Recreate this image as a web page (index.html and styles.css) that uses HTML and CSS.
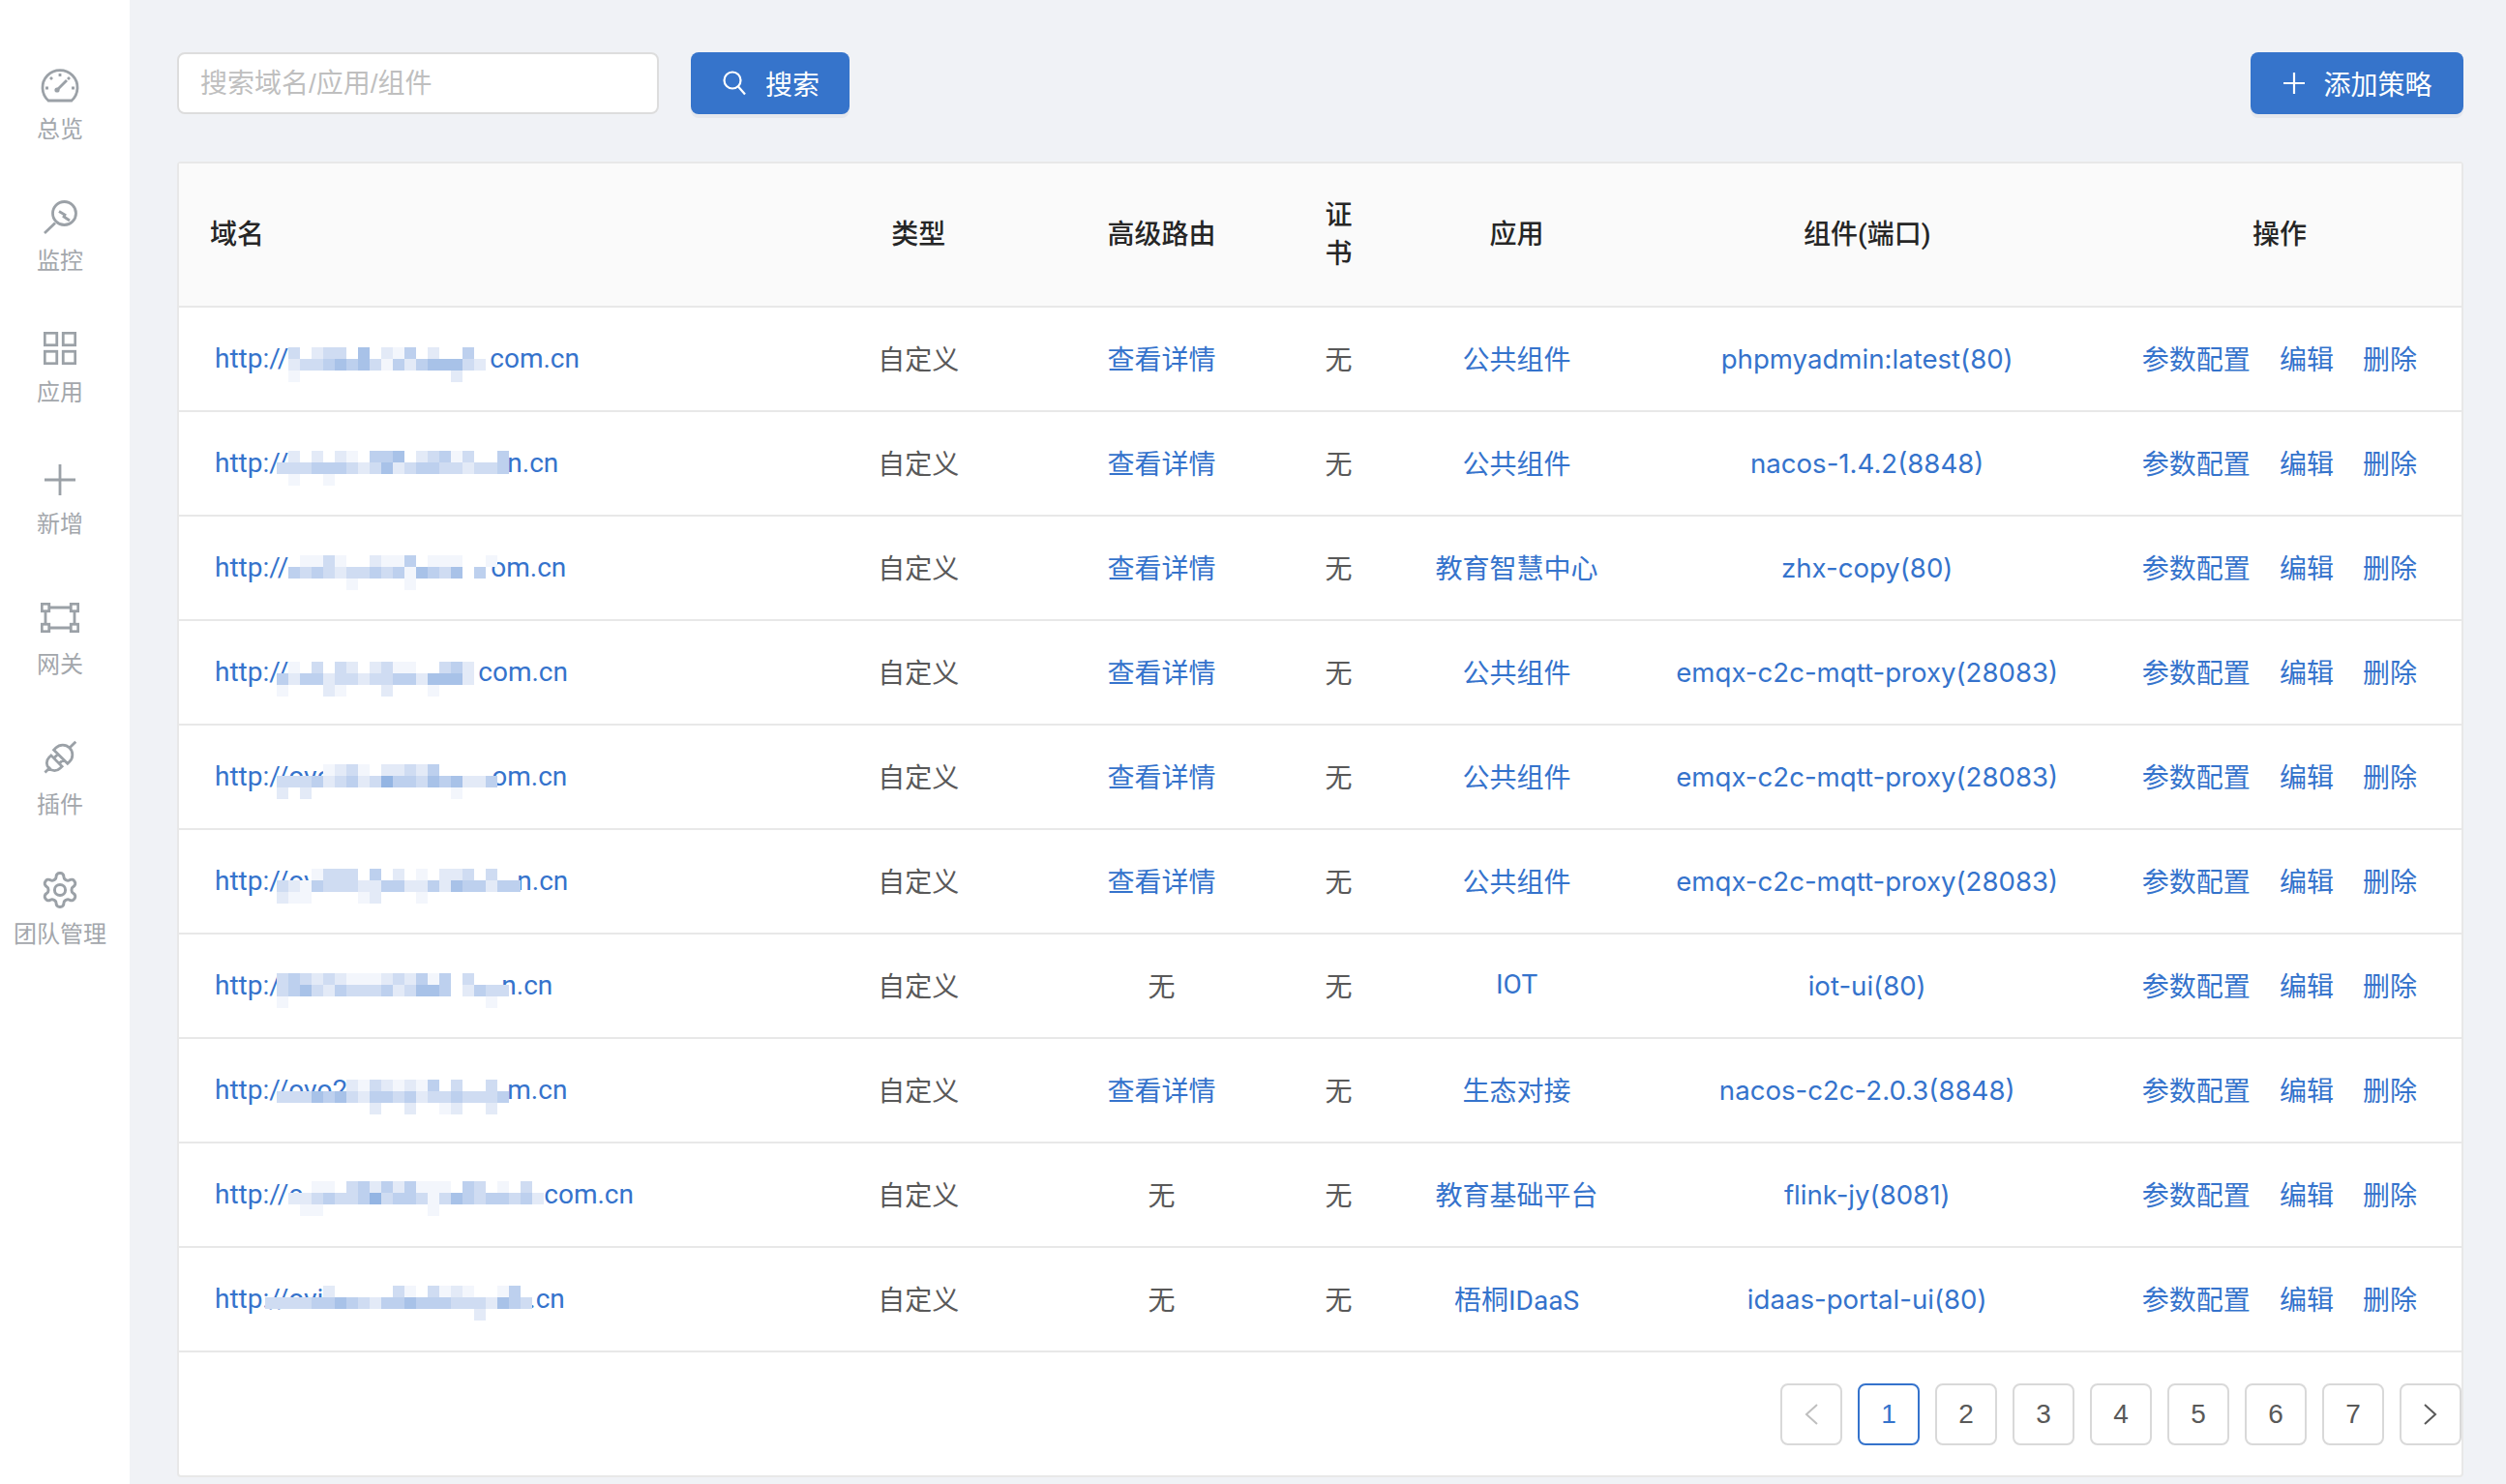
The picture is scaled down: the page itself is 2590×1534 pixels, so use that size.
FILE: index.html
```html
<!DOCTYPE html>
<html lang="zh-CN">
<head>
    <meta charset="UTF-8">
    <title>策略列表</title>
    <link rel="stylesheet" href="styles.css">
</head>
<body>
    <nav class="sidebar">
        <a class="nav-item" href="#">
            <span class="nav-icon">
                <svg width="40" height="36" viewBox="0 0 40 36"><path d="M8 34A18 18 0 1 1 32 34Z"/><path d="M20 6v3M10 10l2 2M30 10l-2 2M5 21h3M32 21h3"/><path d="M17 23L27 13"/><circle class="fill" cx="17" cy="23" r="2.6"/></svg>
            </span>
            <span class="nav-label">总览</span>
        </a>
        <a class="nav-item" href="#">
            <span class="nav-icon">
                <svg width="40" height="40" viewBox="0 0 40 40"><circle cx="24.5" cy="16.5" r="12"/><path d="M4 37l11-10.500"/><path d="M19 14.500l6 3.500-1 2 6 4"/></svg>
            </span>
            <span class="nav-label">监控</span>
        </a>
        <a class="nav-item" href="#">
            <span class="nav-icon">
                <svg width="34" height="34" viewBox="0 0 34 34"><rect x="1.250" y="1.250" width="12.500" height="12.500"/><rect x="20.250" y="1.250" width="12.500" height="12.500"/><rect x="1.250" y="20.250" width="12.500" height="12.500"/><rect x="20.250" y="20.250" width="12.500" height="12.500"/></svg>
            </span>
            <span class="nav-label">应用</span>
        </a>
        <a class="nav-item" href="#">
            <span class="nav-icon">
                <svg width="32" height="32" viewBox="0 0 32 32"><path d="M16 0v32M0 16h32"/></svg>
            </span>
            <span class="nav-label">新增</span>
        </a>
        <a class="nav-item nav-item-tall" href="#">
            <span class="nav-icon">
                <svg width="40" height="31" viewBox="0 0 40 31"><rect x="1.250" y="1.250" width="7.500" height="7.500"/><rect x="31.250" y="1.250" width="7.500" height="7.500"/><rect x="1.250" y="22.250" width="7.500" height="7.500"/><rect x="31.250" y="22.250" width="7.500" height="7.500"/><path d="M9 5h22M9 26h22M5 9v13M35 9v13"/></svg>
            </span>
            <span class="nav-label">网关</span>
        </a>
        <a class="nav-item nav-item-tall" href="#">
            <span class="nav-icon">
                <svg width="38" height="38" viewBox="0 0 38 38"><g transform="rotate(-45 19 19)"><path d="M-3 19H5M14 11H11a8 8 0 0 0 0 16h3ZM14 15h5M14 23h5M20 9V29h3a10 10 0 0 0 0-20ZM33 19h9"/></g></svg>
            </span>
            <span class="nav-label">插件</span>
        </a>
        <a class="nav-item nav-item-last" href="#">
            <span class="nav-icon">
                <svg class="gear" width="42" height="42" viewBox="0 0 24 24"><path d="M12.220 2h-.44a2 2 0 0 0-2 2v.18a2 2 0 0 1-1 1.730l-.43.25a2 2 0 0 1-2 0l-.15-.08a2 2 0 0 0-2.730.73l-.22.38a2 2 0 0 0 .73 2.730l.15.1a2 2 0 0 1 1 1.720v.51a2 2 0 0 1-1 1.740l-.15.09a2 2 0 0 0-.73 2.730l.22.38a2 2 0 0 0 2.730.73l.15-.08a2 2 0 0 1 2 0l.43.25a2 2 0 0 1 1 1.730V20a2 2 0 0 0 2 2h.44a2 2 0 0 0 2-2v-.18a2 2 0 0 1 1-1.730l.43-.25a2 2 0 0 1 2 0l.15.08a2 2 0 0 0 2.730-.73l.22-.39a2 2 0 0 0-.73-2.730l-.15-.08a2 2 0 0 1-1-1.740v-.5a2 2 0 0 1 1-1.740l.15-.09a2 2 0 0 0 .73-2.730l-.22-.38a2 2 0 0 0-2.730-.73l-.15.08a2 2 0 0 1-2 0l-.43-.25a2 2 0 0 1-1-1.730V4a2 2 0 0 0-2-2z"/><circle cx="12" cy="12" r="3.200"/></svg>
            </span>
            <span class="nav-label">团队管理</span>
        </a>
    </nav>

    <main class="main">
        <div class="toolbar">
            <input class="search-input" type="text" placeholder="搜索域名/应用/组件">
            <button class="btn btn-search">
                <svg width="25" height="26" viewBox="0 0 25 26"><circle cx="10" cy="10" r="8.500"/><path d="M16 16.500l7 8"/></svg>
                搜索
            </button>
            <button class="btn btn-add">
                <svg width="22" height="22" viewBox="0 0 22 22"><path d="M11 0v22M0 11h22"/></svg>
                添加策略
            </button>
        </div>

        <div class="card">
            <table class="strategy-table">
                <colgroup>
                    <col class="col-domain"><col class="col-type"><col class="col-route"><col class="col-cert"><col class="col-app"><col class="col-comp"><col class="col-ops">
                </colgroup>
                <thead>
                    <tr>
                        <th class="left">域名</th>
                        <th>类型</th>
                        <th>高级路由</th>
                        <th class="cert-head">证书</th>
                        <th>应用</th>
                        <th>组件(端口)</th>
                        <th>操作</th>
                    </tr>
                </thead>
                <tbody>
                    <tr>
                        <td class="left"><a class="domain" href="#">http://<span class="gap" style="width:208px"></span>com.cn<span class="mosaic" data-x="76" data-y="-12" data-cells="c.bcc.e.bad.b..d|bccdedecadbdeeecb|a.............b"></span></a></td>
                        <td>自定义</td><td><a href="#">查看详情</a></td><td>无</td><td><a href="#">公共组件</a></td><td><a class="comp" href="#">phpmyadmin:latest(80)</a></td>
                        <td><div class="ops"><a href="#">参数配置</a><a href="#">编辑</a><a href="#">删除</a></div></td>
                    </tr>
                    <tr>
                        <td class="left"><a class="domain" href="#">http://<span class="gap" style="width:226px"></span>n.cn<span class="mosaic" data-x="64" data-y="-13" data-cells=".b.b.ba.dde.bcdac..d|cccdddcbcebcddccbccd|.a..a"></span></a></td>
                        <td>自定义</td><td><a href="#">查看详情</a></td><td>无</td><td><a href="#">公共组件</a></td><td><a class="comp" href="#">nacos-1.4.2(8848)</a></td>
                        <td><div class="ops"><a href="#">参数配置</a><a href="#">编辑</a><a href="#">删除</a></div></td>
                    </tr>
                    <tr>
                        <td class="left"><a class="domain" href="#">http://<span class="gap" style="width:209px"></span>om.cn<span class="mosaic" data-x="76" data-y="-13" data-cells=".aaca..baad.aaa..a|dcdcbccdcdaedce.d|.....a....a"></span></a></td>
                        <td>自定义</td><td><a href="#">查看详情</a></td><td>无</td><td><a href="#">教育智慧中心</a></td><td><a class="comp" href="#">zhx-copy(80)</a></td>
                        <td><div class="ops"><a href="#">参数配置</a><a href="#">编辑</a><a href="#">删除</a></div></td>
                    </tr>
                    <tr>
                        <td class="left"><a class="domain" href="#">http://<span class="gap" style="width:196px"></span>com.cn<span class="mosaic" data-x="64" data-y="-11" data-cells=".a.c.cb.bcaa..cdb|dbddbccbccddbeeeb|a...ba...b...a"></span></a></td>
                        <td>自定义</td><td><a href="#">查看详情</a></td><td>无</td><td><a href="#">公共组件</a></td><td><a class="comp" href="#">emqx-c2c-mqtt-proxy(28083)</a></td>
                        <td><div class="ops"><a href="#">参数配置</a><a href="#">编辑</a><a href="#">删除</a></div></td>
                    </tr>
                    <tr>
                        <td class="left"><a class="domain" href="#">http://<span class="gap" style="width:210px">ovo2</span>om.cn<span class="mosaic" data-x="64" data-y="-13" data-cells="....abca.bbcbd|cccdbcdbcfddcedebbd|b.b............a"></span></a></td>
                        <td>自定义</td><td><a href="#">查看详情</a></td><td>无</td><td><a href="#">公共组件</a></td><td><a class="comp" href="#">emqx-c2c-mqtt-proxy(28083)</a></td>
                        <td><div class="ops"><a href="#">参数配置</a><a href="#">编辑</a><a href="#">删除</a></div></td>
                    </tr>
                    <tr>
                        <td class="left"><a class="domain" href="#">http://<span class="gap" style="width:236px">ovo2</span>n.cn<span class="mosaic" data-x="64" data-y="-13" data-cells="...accc.d.b.a.bbc.c|cbadcccbbddbbdbeddbdd|baa....ab...a"></span></a></td>
                        <td>自定义</td><td><a href="#">查看详情</a></td><td>无</td><td><a href="#">公共组件</a></td><td><a class="comp" href="#">emqx-c2c-mqtt-proxy(28083)</a></td>
                        <td><div class="ops"><a href="#">参数配置</a><a href="#">编辑</a><a href="#">删除</a></div></td>
                    </tr>
                    <tr>
                        <td class="left"><a class="domain" href="#">http://<span class="gap" style="width:220px"></span>n.cn<span class="mosaic" data-x="64" data-y="-13" data-cells="cdcbcbaaabcbdad.c|cdecbdcccdbceed.bdcc|a.................a"></span></a></td>
                        <td>自定义</td><td>无</td><td>无</td><td><a href="#">IOT</a></td><td><a class="comp" href="#">iot-ui(80)</a></td>
                        <td><div class="ops"><a href="#">参数配置</a><a href="#">编辑</a><a href="#">删除</a></div></td>
                    </tr>
                    <tr>
                        <td class="left"><a class="domain" href="#">http://<span class="gap" style="width:226px">ovo2</span>m.cn<span class="mosaic" data-x="64" data-y="-11" data-cells="......bacbabad.c..c|cccedecbddcdbccdcccd|........b..b..ab..b"></span></a></td>
                        <td>自定义</td><td><a href="#">查看详情</a></td><td>无</td><td><a href="#">生态对接</a></td><td><a class="comp" href="#">nacos-c2c-2.0.3(8848)</a></td>
                        <td><div class="ops"><a href="#">参数配置</a><a href="#">编辑</a><a href="#">删除</a></div></td>
                    </tr>
                    <tr>
                        <td class="left"><a class="domain" href="#">http://<span class="gap" style="width:264px">c</span>com.cn<span class="mosaic" data-x="76" data-y="-14" data-cells="..aa.cdbdbdaaa.dc.a.c|bbcdccdfcddcacedcddcdb|.aa.........a"></span></a></td>
                        <td>自定义</td><td>无</td><td>无</td><td><a href="#">教育基础平台</a></td><td><a class="comp" href="#">flink-jy(8081)</a></td>
                        <td><div class="ops"><a href="#">参数配置</a><a href="#">编辑</a><a href="#">删除</a></div></td>
                    </tr>
                    <tr>
                        <td class="left"><a class="domain" href="#">http://<span class="gap" style="width:248px">ovi</span>.cn<span class="mosaic" data-x="52" data-y="-14" data-cells=".....b.....ca.caba..ad|ccccddedcbddedddcccbedc|..................b"></span></a></td>
                        <td>自定义</td><td>无</td><td>无</td><td><a href="#">梧桐IDaaS</a></td><td><a class="comp" href="#">idaas-portal-ui(80)</a></td>
                        <td><div class="ops"><a href="#">参数配置</a><a href="#">编辑</a><a href="#">删除</a></div></td>
                    </tr>
                </tbody>
            </table>
            <div class="pagination">
                <button class="page page-disabled"><svg width="14" height="22" viewBox="0 0 14 22"><path d="M13 1L2 11l11 10"/></svg></button>
                <button class="page page-active">1</button>
                <button class="page">2</button>
                <button class="page">3</button>
                <button class="page">4</button>
                <button class="page">5</button>
                <button class="page">6</button>
                <button class="page">7</button>
                <button class="page"><svg width="14" height="22" viewBox="0 0 14 22"><path d="M1 1l11 10L1 21"/></svg></button>
            </div>
        </div>
    </main>
    <script src="mosaic.js"></script>
</body>
</html>
```
FILE: styles.css
```css
* {
    box-sizing: border-box;
}
body {
    margin: 0;
    height: 100vh;
    display: flex;
    overflow: hidden;
    background: #f0f2f6;
    font-family: Roboto, "Noto Sans CJK SC", sans-serif;
    font-size: 28px;
    color: #595959;
}
a {
    color: #3573cc;
    text-decoration: none;
}

/* sidebar */
.sidebar {
    width: 134px;
    flex-shrink: 0;
    padding: 66px 10px 0 0;
    display: flex;
    flex-direction: column;
    gap: 52px;
    background: #ffffff;
}
.nav-item {
    display: flex;
    flex-direction: column;
    align-items: center;
    color: #a3a7ac;
}
.nav-item-tall {
    margin-top: 3px;
}
.nav-item-last {
    margin-top: -2px;
}
.nav-icon {
    height: 44px;
    display: flex;
    align-items: center;
    justify-content: center;
}
.nav-item-tall .nav-icon {
    height: 50px;
}
.nav-icon svg {
    fill: none;
    stroke: #9ba1a7;
    stroke-width: 2.800;
}
.nav-icon svg .fill {
    fill: #9ba1a7;
    stroke: none;
}
.nav-icon svg.gear {
    stroke-width: 1.700;
}
.nav-label {
    margin-top: 8px;
    font-size: 24px;
    line-height: 32px;
    white-space: nowrap;
}

/* main column */
.main {
    flex: 1;
    min-width: 0;
    padding: 54px 44px 0 49px;
}
.toolbar {
    display: flex;
    align-items: center;
    gap: 33px;
    margin-bottom: 49px;
}
.search-input {
    width: 498px;
    height: 64px;
    padding: 2px 22px 0;
    border: 2px solid #dddddd;
    border-radius: 8px;
    background: #ffffff;
    font: inherit;
    font-family: "Liberation Sans", "Noto Sans CJK SC", sans-serif;
    outline: none;
}
.search-input::placeholder {
    color: #bfbfbf;
}
.btn {
    height: 64px;
    display: flex;
    align-items: center;
    justify-content: center;
    gap: 19px;
    padding: 0 0 0 2px;
    border: none;
    border-radius: 8px;
    background: #3674cb;
    box-shadow: 0 4px 0 #e6e8ed;
    color: #ffffff;
    font: inherit;
    cursor: pointer;
}
.btn svg {
    fill: none;
    stroke: #ffffff;
    stroke-width: 2.200;
}
.btn-search {
    width: 164px;
}
.btn-add {
    width: 220px;
    margin-left: auto;
}

/* table card */
.card {
    height: 1360px;
    border: 2px solid #e8e8e8;
    border-radius: 4px;
    background: #ffffff;
}
.strategy-table {
    width: 100%;
    table-layout: fixed;
    border-collapse: separate;
    border-spacing: 0;
}
.col-domain { width: 636px; }
.col-type { width: 256px; }
.col-route { width: 246px; }
.col-cert { width: 120px; }
.col-app { width: 248px; }
.col-comp { width: 476px; }
.col-ops { width: 376px; }
.strategy-table th {
    height: 149px;
    padding: 0 32px;
    background: #fafafa;
    border-bottom: 2px solid #e8e8e8;
    color: #262626;
    font-weight: 500;
    line-height: 40px;
    text-align: center;
}
.strategy-table th.cert-head {
    padding: 0 40px;
}
.strategy-table td {
    height: 108px;
    padding: 0 8px 3px;
    border-bottom: 2px solid #e8e8e8;
    text-align: center;
    white-space: nowrap;
}
.strategy-table .left {
    text-align: left;
}
.strategy-table td.left {
    padding-left: 37px;
}
.domain {
    position: relative;
    top: 1px;
    display: inline-block;
    line-height: 40px;
}
.gap {
    display: inline-block;
    overflow: hidden;
    vertical-align: bottom;
    height: 40px;
}
.mosaic svg {
    position: absolute;
    display: block;
}
.comp {
    position: relative;
    top: 1px;
    font-family: Inter, "Noto Sans CJK SC", sans-serif;
    font-size: 27.600px;
}
.ops {
    display: flex;
    justify-content: center;
    gap: 30px;
}

/* pagination */
.pagination {
    display: flex;
    justify-content: flex-end;
    gap: 16px;
    padding-top: 32px;
}
.page {
    width: 64px;
    height: 64px;
    display: flex;
    align-items: center;
    justify-content: center;
    padding: 0;
    border: 2px solid #d9d9d9;
    border-radius: 8px;
    background: #ffffff;
    color: #595959;
    font-family: "Liberation Sans", sans-serif;
    font-size: 28px;
    cursor: pointer;
}
.page svg {
    fill: none;
    stroke: #595959;
    stroke-width: 2;
}
.page-disabled svg {
    stroke: #bfbfbf;
}
.page-active {
    border-color: #3573cc;
    color: #3573cc;
}
```
FILE: mosaic.js
```js
// draws the pixelated cover over masked host names
var SHADES = {
    a: '#f3f6fc',
    b: '#e3eaf7',
    c: '#cfdcf2',
    d: '#bdd0ee',
    e: '#a8c2e8',
    f: '#94b5e3'
};
var CELL = 12;
var NS = 'http://www.w3.org/2000/svg';

document.querySelectorAll('.mosaic').forEach(function (el) {
    var rows = el.dataset.cells.split('|');
    var cols = Math.max.apply(null, rows.map(function (r) { return r.length; }));
    var svg = document.createElementNS(NS, 'svg');
    svg.setAttribute('width', cols * CELL);
    svg.setAttribute('height', rows.length * CELL);
    svg.style.left = el.dataset.x + 'px';
    svg.style.top = 'calc(50% + ' + el.dataset.y + 'px)';
    rows.forEach(function (row, y) {
        row.split('').forEach(function (c, x) {
            if (c === '.') return;
            var r = document.createElementNS(NS, 'rect');
            r.setAttribute('x', x * CELL);
            r.setAttribute('y', y * CELL);
            r.setAttribute('width', CELL);
            r.setAttribute('height', CELL);
            r.setAttribute('fill', SHADES[c]);
            svg.appendChild(r);
        });
    });
    el.appendChild(svg);
});
```
